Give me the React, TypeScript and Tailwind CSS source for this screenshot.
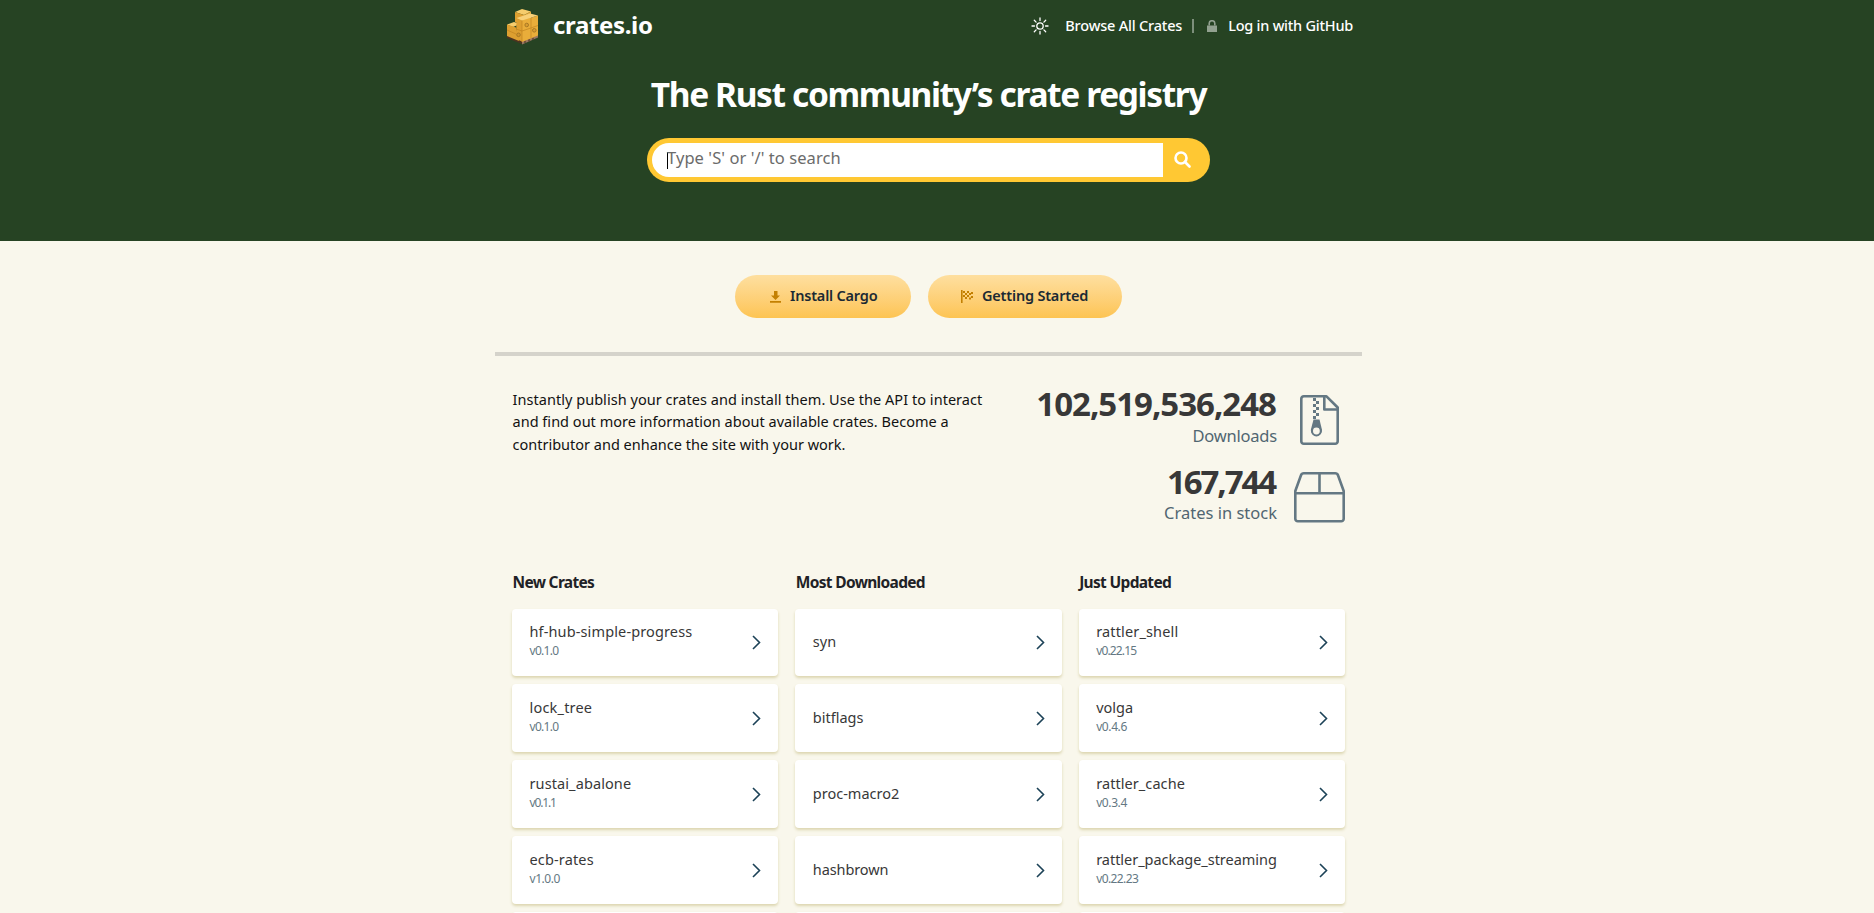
import React from "react";

const F = "font-['Noto_Sans',sans-serif]";

function Logo() {
  return (
    <svg width="34" height="38" viewBox="0 0 34 38" className="shrink-0">
      <path d="M0 28 L15 34 L15 37 L0 31Z" fill="#4d3320" />
      <path d="M15 34 L31 28 L31 30.500 L15 37.500Z" fill="#9a7660" />
      <path d="M18 33.500v2.500M22 32v2.500M26 30.500v2.500" stroke="#5a3d2a" strokeWidth="1.300" />
      <path d="M8 5 L15 2 L24 4.500 L17 8Z" fill="#f6cc6c" />
      <path d="M8 5 L17 8 L17 18 L8 15Z" fill="#dd9f30" />
      <path d="M17 8 L24 4.500 L24 12 L17 15Z" fill="#e6ab3c" />
      <path d="M0 17.500 L7 15 L13 17 L6 20Z" fill="#f6cc6c" />
      <path d="M0 17.500 L9 20.500 L12 34 L0 29Z" fill="#dd9f30" />
      <path d="M9.500 11 L15 13.500 L15 34.500 L9 32Z" fill="#dd9f30" />
      <path d="M15 13.500 L31 8.500 L31 28.500 L15 35Z" fill="#e9ad3a" />
      <path d="M9.500 11 L23 6.500 L31 8.500 L15 13.500Z" fill="#f8d078" />
      <path d="M15 13.500V35M15 24L31 18.500M24 11V31M9 22L15 24M0 23L9 27" stroke="#c1841f" strokeWidth="0.700" fill="none" />
      <circle cx="19.700" cy="18" r="1.800" fill="#d99d30" stroke="#9c6f22" strokeWidth="0.800" />
      <circle cx="27.300" cy="23.300" r="1.800" fill="#d99d30" stroke="#9c6f22" strokeWidth="0.800" />
      <circle cx="11.500" cy="27.800" r="1.800" fill="#d0942b" stroke="#9c6f22" strokeWidth="0.800" />
    </svg>
  );
}

function Sun() {
  return (
    <svg width="18" height="18" viewBox="0 0 18 18" fill="none" stroke="#fff" strokeWidth="1.300" strokeLinecap="round">
      <circle cx="9" cy="9" r="3.200" />
      <path d="M9 1v2.500M9 14.500V17M1 9h2.500M14.500 9H17M3.300 3.300l1.800 1.800M12.900 12.900l1.800 1.800M3.300 14.700l1.800-1.800M12.900 5.100l1.800-1.800" />
    </svg>
  );
}

function Lock() {
  return (
    <svg width="10" height="12" viewBox="0 0 10 12">
      <path d="M0 5.500h10V12H0z" fill="#92a190" />
      <path d="M2.200 5.500V3.300a2.800 2.600 0 0 1 5.600 0v2.200" fill="none" stroke="#92a190" strokeWidth="1.600" />
    </svg>
  );
}

function ZipIcon() {
  return (
    <svg width="51" height="51" viewBox="0 0 51 51" fill="none" stroke="#647883" strokeWidth="2.600" strokeLinejoin="round">
      <path d="M9.800 1.300H32.500L43.700 12.500V46.200a2.500 2.500 0 0 1-2.500 2.500H9.800A2.500 2.500 0 0 1 7.300 46.200V3.800a2.500 2.500 0 0 1 2.500-2.500z" />
      <path d="M30.300 1.300v13.200h13.400" />
      <path d="M19 3h3v3h-3zM22 6h3v3h-3zM19 9h3v3h-3zM22 12h3v3h-3zM19 15h3v3h-3zM22 18h3v3h-3zM19 21h3v3h-3z" fill="#647883" stroke="none" />
      <path d="M19.500 24.500h6L28 35a5.600 5.600 0 0 1-11.200 0z" fill="#647883" stroke="none" />
      <circle cx="22.400" cy="36" r="4.400" fill="#f9f7ec" strokeWidth="2" />
    </svg>
  );
}

function BoxIcon() {
  return (
    <svg width="51" height="51" viewBox="0 0 51 51" fill="none" stroke="#647883" strokeWidth="2.600" strokeLinejoin="round">
      <path d="M1.300 21.300h48.400v25.400a2.500 2.500 0 0 1-2.500 2.500H3.800a2.500 2.500 0 0 1-2.500-2.500zL1.300 19 7 3.300a3 3 0 0 1 2.800-2h31.400a3 3 0 0 1 2.800 2l5.700 15.700v2.300M25.500 1.300v20" />
    </svg>
  );
}

function Download() {
  return (
    <svg width="11" height="13" viewBox="0 0 11 13" fill="#c38002">
      <path d="M4 1h3.500v4.500h2.500L5.500 10 1 5.500h3zM0 11h11v1.800H0z" />
    </svg>
  );
}

function Flag() {
  return (
    <svg width="13" height="13" viewBox="0 0 13 13" fill="#c38002">
      <path d="M0 0h1.600v13H0z" />
      <path d="M2 1h2v2H2zM6 1h2v2H6zM10 2h2v2h-2zM4 3h2v2H4zM8 3h2v2H8zM2 5h2v2H2zM6 5h2v2H6zM10 6h2v2h-2zM4 7h2v2H4zM8 7.500h2v2H8z" />
    </svg>
  );
}

type Crate = { name: string; version?: string; track?: string; vtrack?: string };

function Card({ name, version, track = "", vtrack = "" }: Crate) {
  return (
    <div className="flex h-[68px] items-center justify-between rounded-[4px] bg-white px-[17px] shadow-[0_2px_3px_#dcd6b0] first:h-[67px]">
      <div className="flex flex-col pb-[3px] pl-[0.500px]">
        <span className={`whitespace-nowrap text-[14.500px] leading-[20px] text-[#383838] ${track}`}>{name}</span>
        {version && <span className={`text-[12px] leading-[20px] text-[#647883] ${vtrack}`}>{version}</span>}
      </div>
      <svg width="9" height="15" viewBox="0 0 9 15" fill="none" stroke="#1c4257" strokeWidth="1.600">
        <path d="M1 1l6.500 6.500L1 14" />
      </svg>
    </div>
  );
}

const columns: { title: string; cards: Crate[] }[] = [
  {
    title: "New Crates",
    cards: [
      { name: "hf-hub-simple-progress", version: "v0.1.0", track: "tracking-[0.130px]", vtrack: "tracking-[-0.700px]" },
      { name: "lock_tree", version: "v0.1.0", track: "tracking-[0.200px]", vtrack: "tracking-[-0.700px]" },
      { name: "rustai_abalone", version: "v0.1.1", track: "tracking-[0.100px]", vtrack: "tracking-[-1.150px]" },
      { name: "ecb-rates", version: "v1.0.0", track: "tracking-[0.150px]", vtrack: "tracking-[-0.450px]" },
      { name: "" },
    ],
  },
  {
    title: "Most Downloaded",
    cards: [
      { name: "syn" },
      { name: "bitflags" },
      { name: "proc-macro2" },
      { name: "hashbrown", track: "tracking-[-0.100px]" },
      { name: "" },
    ],
  },
  {
    title: "Just Updated",
    cards: [
      { name: "rattler_shell", version: "v0.22.15", track: "tracking-[0.150px]", vtrack: "tracking-[-0.850px]" },
      { name: "volga", version: "v0.4.6", vtrack: "tracking-[-0.400px]" },
      { name: "rattler_cache", version: "v0.3.4", track: "tracking-[0.070px]", vtrack: "tracking-[-0.400px]" },
      { name: "rattler_package_streaming", version: "v0.22.23", track: "tracking-[-0.030px]", vtrack: "tracking-[-0.600px]" },
      { name: "" },
    ],
  },
];

export default function App() {
  return (
    <div className={`h-[913px] w-full overflow-hidden bg-[#f9f7ec] ${F}`}>
      <header className="h-[241px] bg-[#264323] pr-[17px] text-white">
        <div className="mx-auto flex h-[52px] w-[867px] items-center justify-between pl-[12px] pr-[9px]">
          <div className="flex items-center gap-[12px]">
            <Logo />
            <span className="pb-[2px] text-[24px] font-bold leading-[30px] tracking-[-0.350px]">crates.io</span>
          </div>
          <nav className="flex items-center text-[14.500px] font-medium tracking-[-0.190px]">
            <Sun />
            <span className="ml-[16px]">Browse All Crates</span>
            <span className="ml-[10px] h-[14px] w-[2px] bg-[#7d8f7b]" />
            <span className="ml-[13px] mr-[11px]"><Lock /></span>
            <span className="tracking-[-0.240px]">Log in with GitHub</span>
          </nav>
        </div>
        <h1 className="mt-[18px] text-center text-[33.500px] font-bold leading-[48px] tracking-[-1.370px]">The Rust community’s crate registry</h1>
        <div className="mx-auto mt-[20px] flex h-[44px] w-[563px] rounded-full bg-[#ffc833] p-[5px]">
          <div className="flex h-[34px] w-[511px] items-center rounded-l-full bg-white pl-[15px]">
            <span className="h-[17px] w-px bg-black" />
            <span className="-ml-px pb-[3px] text-[16.500px] tracking-[0.070px] text-[#6b6b6b]">Type 'S' or '/' to search</span>
          </div>
          <svg className="ml-[11px] mt-[8px]" width="17" height="17" viewBox="0 0 17 17" fill="none" stroke="#fff" strokeWidth="2.600" strokeLinecap="round">
            <circle cx="7" cy="7" r="5.500" />
            <path d="M11 11l4.500 4.500" />
          </svg>
        </div>
      </header>

      <main className="mx-auto w-[884px] pr-[17px]">
        <div className="flex justify-center gap-[17px] pt-[34px]">
          <div className="flex h-[43px] w-[176px] items-center rounded-full bg-linear-to-b from-[#fedf9f] to-[#fdc452] pl-[35px] text-[#1c2a33]">
            <Download />
            <span className="ml-[9px] whitespace-nowrap pb-[1.500px] text-[14.500px] font-semibold tracking-[-0.200px]">Install Cargo</span>
          </div>
          <div className="flex h-[43px] w-[194px] items-center rounded-full bg-linear-to-b from-[#fedf9f] to-[#fdc452] pl-[33px] text-[#1c2a33]">
            <Flag />
            <span className="ml-[8px] whitespace-nowrap pb-[1.500px] text-[14.500px] font-semibold tracking-[-0.200px]">Getting Started</span>
          </div>
        </div>
        <div className="mt-[34px] h-[4px] bg-[#d5d3cb]" />
        <section className="flex justify-between px-[17px] pt-[31px]">
          <p className="pl-[0.500px] pt-[1px] text-[14.500px] leading-[22.400px] tracking-[0.040px] text-[#121212]">
            <span className="block whitespace-nowrap">Instantly publish your crates and install them. Use the API to interact</span>
            <span className="block whitespace-nowrap tracking-[0.020px]">and find out more information about available crates. Become a</span>
            <span className="block whitespace-nowrap tracking-[0px]">contributor and enhance the site with your work.</span>
          </p>
          <div className="flex flex-col gap-[14px]">
            <div className="flex items-start justify-end gap-[17px]">
              <div className="text-right">
                <div className="pr-[1px] text-[33px] font-bold leading-[34px] tracking-[-1px] text-[#383838]">102,519,536,248</div>
                <div className="text-[16.500px] leading-[30px] tracking-[-0.200px] text-[#516671]">Downloads</div>
              </div>
              <div className="pt-[8px]"><ZipIcon /></div>
            </div>
            <div className="flex h-[62px] items-start justify-end gap-[17px]">
              <div className="text-right">
                <div className="pr-[2px] text-[33px] font-bold leading-[34px] tracking-[-2.100px] text-[#383838]">167,744</div>
                <div className="text-[16.500px] leading-[28px] text-[#516671]">Crates in stock</div>
              </div>
              <div className="pt-[7px]"><BoxIcon /></div>
            </div>
          </div>
        </section>
        <section className="mt-[43px] grid grid-cols-3 gap-[17px] px-[17px]">
          {columns.map((c) => (
            <div key={c.title}>
              <h2 className="pl-[0.500px] text-[15.500px] font-bold leading-[24px] tracking-[-0.680px] text-[#1f2226]">{c.title}</h2>
              <div className="mt-[15px] flex flex-col gap-[8px]">
                {c.cards.map((k, i) => (
                  <Card key={i} {...k} />
                ))}
              </div>
            </div>
          ))}
        </section>
      </main>
    </div>
  );
}
